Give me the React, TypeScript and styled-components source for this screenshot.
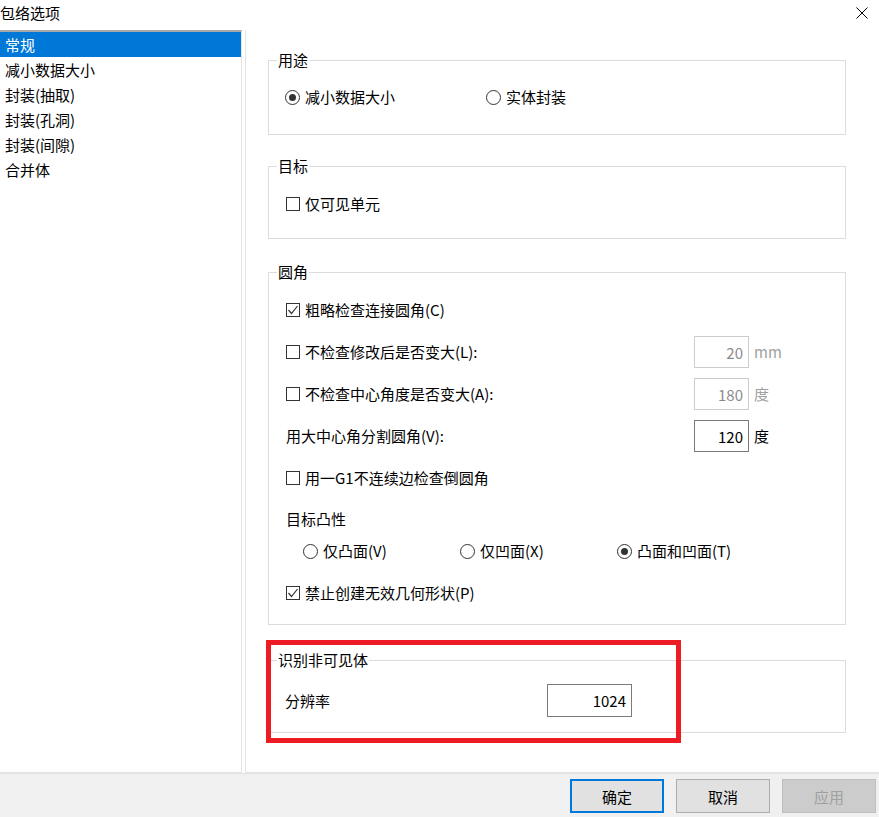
import React from "react";
import styled, { createGlobalStyle } from "styled-components";

const GlobalStyle = createGlobalStyle`
  html, body { margin: 0; padding: 0; background: #fff; }
  body {
    font-family: "Noto Sans CJK SC", "Noto Sans", sans-serif;
    font-size: 15px;
    color: #000;
  }
  * { box-sizing: border-box; }
`;

const Window = styled.div`
  width: 879px;
  height: 817px;
  display: flex;
  flex-direction: column;
  overflow: hidden;
  background: #fff;
`;

const TitleBar = styled.div`
  height: 30px;
  display: flex;
  justify-content: space-between;
  align-items: flex-start;
`;

const TitleText = styled.div`
  padding-top: 3px;
  line-height: 20px;
`;

const CloseIcon = styled.svg`
  width: 12px;
  height: 12px;
  margin: 7px 11px 0 0;
`;

const Body = styled.div`
  height: 743px;
  display: flex;
  gap: 3px;
`;

const NavList = styled.div`
  width: 242px;
  height: 100%;
  border-top: 2px solid #a8a8a8;
  border-right: 1px solid #e3e3e3;
  border-bottom: 1px solid #e3e3e3;
`;

const NavItem = styled.div<{ $active?: boolean }>`
  height: 25px;
  line-height: 25px;
  padding-left: 5px;
  background: ${(p) => (p.$active ? "#0078d7" : "transparent")};
  color: ${(p) => (p.$active ? "#fff" : "#000")};
  white-space: nowrap;
`;

const Content = styled.div`
  flex: 1;
  position: relative;
  border-left: 1px solid #e3e3e3;
  border-bottom: 1px solid #e3e3e3;
  padding: 30px 0 0 22px;
  display: flex;
  flex-direction: column;
`;

const Group = styled.div<{ $h: number; $mt: number }>`
  width: 578px;
  height: ${(p) => p.$h}px;
  margin-top: ${(p) => p.$mt}px;
  border: 1px solid #dcdcdc;
  display: flex;
  flex-direction: column;
  flex-shrink: 0;
`;

const Legend = styled.div`
  width: fit-content;
  height: 20px;
  line-height: 20px;
  margin: -11px 0 -9px 8px;
  padding: 0 1px;
  background: #fff;
`;

const Line = styled.div<{ $mt: number; $h?: number; $pl?: number }>`
  margin-top: ${(p) => p.$mt}px;
  height: ${(p) => p.$h ?? 24}px;
  padding-left: ${(p) => p.$pl ?? 17}px;
  display: flex;
  align-items: center;
  line-height: 20px;
  white-space: nowrap;
`;

const FieldLine = styled(Line)<{ $col: number }>`
  display: grid;
  grid-template-columns: ${(p) => p.$col}px auto auto;
  justify-content: start;
  column-gap: 5px;
  align-items: center;
`;

const RadioGrid = styled(Line)<{ $cols: string }>`
  display: grid;
  grid-template-columns: ${(p) => p.$cols};
  align-items: center;
`;

const Option = styled.label`
  display: flex;
  align-items: center;
  gap: 5px;
  line-height: 20px;
  white-space: nowrap;
`;

const Box = styled.span`
  width: 14px;
  height: 14px;
  border: 1px solid #333;
  background: #fff;
  display: inline-flex;
  align-items: center;
  justify-content: center;
  flex-shrink: 0;
`;

const Radio = styled.span<{ $on?: boolean }>`
  width: 15px;
  height: 15px;
  border: 1px solid #333;
  border-radius: 50%;
  background: #fff;
  display: inline-flex;
  align-items: center;
  justify-content: center;
  flex-shrink: 0;
  &::after {
    content: "";
    width: 7px;
    height: 7px;
    border-radius: 50%;
    background: ${(p) => (p.$on ? "#333" : "transparent")};
  }
`;

const NumBox = styled.input<{ $w: number; $h: number; $disabled?: boolean }>`
  width: ${(p) => p.$w}px;
  height: ${(p) => p.$h}px;
  border: 1px solid ${(p) => (p.$disabled ? "#cccccc" : "#7a7a7a")};
  background: #fff;
  color: ${(p) => (p.$disabled ? "#8c8c8c" : "#000")};
  font: inherit;
  font-size: 15px;
  text-align: right;
  padding: 0 5px 0 0;
  margin: 0;
  outline: none;
`;

const Unit = styled.span<{ $disabled?: boolean }>`
  color: ${(p) => (p.$disabled ? "#a0a0a0" : "#000")};
  line-height: 20px;
`;

const Highlight = styled.div`
  position: absolute;
  left: 20px;
  top: 610px;
  width: 415px;
  height: 103px;
  border: 5px solid #ed1c24;
  pointer-events: none;
`;

const Footer = styled.div`
  height: 44px;
  border-top: 1px solid #e3e3e3;
  background: #f0f0f0;
  display: flex;
  justify-content: flex-end;
  align-items: flex-start;
  gap: 12px;
  padding: 5px 3px 0 0;
`;

const Button = styled.button<{ $variant?: "primary" | "normal" | "disabled" }>`
  width: 94px;
  height: 34px;
  margin: 0;
  padding: 0;
  font: inherit;
  font-size: 15px;
  background: ${(p) => (p.$variant === "disabled" ? "#cccccc" : "#e1e1e1")};
  color: ${(p) => (p.$variant === "disabled" ? "#a0a0a0" : "#000")};
  border: ${(p) =>
    p.$variant === "primary"
      ? "2px solid #0078d7"
      : p.$variant === "disabled"
      ? "1px solid #bfbfbf"
      : "1px solid #adadad"};
`;

const Check = ({ on }: { on?: boolean }) => (
  <Box>
    {on && (
      <svg width="12" height="12" viewBox="0 0 12 12">
        <polyline points="1.5,6 4.5,9.5 10.5,2" fill="none" stroke="#333" strokeWidth="1.2" />
      </svg>
    )}
  </Box>
);

const navItems = ["常规", "减小数据大小", "封装(抽取)", "封装(孔洞)", "封装(间隙)", "合并体"];

export default function App() {
  return (
    <Window>
      <GlobalStyle />
      <TitleBar>
        <TitleText>包络选项</TitleText>
        <CloseIcon viewBox="0 0 12 12">
          <line x1="0.5" y1="0.5" x2="11.5" y2="11.5" stroke="#000" strokeWidth="1" />
          <line x1="11.5" y1="0.5" x2="0.5" y2="11.5" stroke="#000" strokeWidth="1" />
        </CloseIcon>
      </TitleBar>
      <Body>
        <NavList>
          {navItems.map((t, i) => (
            <NavItem key={t} $active={i === 0}>
              {t}
            </NavItem>
          ))}
        </NavList>
        <Content>
          <Group $h={75} $mt={0}>
            <Legend>用途</Legend>
            <RadioGrid $mt={24} $pl={16} $cols="201px auto">
              <Option>
                <Radio $on />
                减小数据大小
              </Option>
              <Option>
                <Radio />
                实体封装
              </Option>
            </RadioGrid>
          </Group>

          <Group $h={73} $mt={31}>
            <Legend>目标</Legend>
            <Line $mt={25}>
              <Option>
                <Check />
                仅可见单元
              </Option>
            </Line>
          </Group>

          <Group $h={353} $mt={33}>
            <Legend>圆角</Legend>
            <Line $mt={21} $h={32}>
              <Option>
                <Check on />
                粗略检查连接圆角(C)
              </Option>
            </Line>
            <FieldLine $mt={10} $h={32} $col={403}>
              <Option>
                <Check />
                不检查修改后是否变大(L):
              </Option>
              <NumBox $w={55} $h={32} $disabled readOnly value="20" />
              <Unit $disabled>mm</Unit>
            </FieldLine>
            <FieldLine $mt={10} $h={32} $col={403}>
              <Option>
                <Check />
                不检查中心角度是否变大(A):
              </Option>
              <NumBox $w={55} $h={32} $disabled readOnly value="180" />
              <Unit $disabled>度</Unit>
            </FieldLine>
            <FieldLine $mt={10} $h={32} $col={403}>
              <span>用大中心角分割圆角(V):</span>
              <NumBox $w={55} $h={32} readOnly value="120" />
              <Unit>度</Unit>
            </FieldLine>
            <Line $mt={10} $h={32}>
              <Option>
                <Check />
                用一G1不连续边检查倒圆角
              </Option>
            </Line>
            <Line $mt={13}>目标凸性</Line>
            <RadioGrid $mt={8} $pl={34} $cols="157px 157px auto">
              <Option>
                <Radio />
                仅凸面(V)
              </Option>
              <Option>
                <Radio />
                仅凹面(X)
              </Option>
              <Option>
                <Radio $on />
                凸面和凹面(T)
              </Option>
            </RadioGrid>
            <Line $mt={18}>
              <Option>
                <Check on />
                禁止创建无效几何形状(P)
              </Option>
            </Line>
          </Group>

          <Group $h={73} $mt={35}>
            <Legend>识别非可见体</Legend>
            <FieldLine $mt={23} $h={33} $col={257} $pl={16}>
              <span>分辨率</span>
              <NumBox $w={85} $h={33} readOnly value="1024" />
            </FieldLine>
          </Group>

          <Highlight />
        </Content>
      </Body>
      <Footer>
        <Button $variant="primary">确定</Button>
        <Button $variant="normal">取消</Button>
        <Button $variant="disabled">应用</Button>
      </Footer>
    </Window>
  );
}
